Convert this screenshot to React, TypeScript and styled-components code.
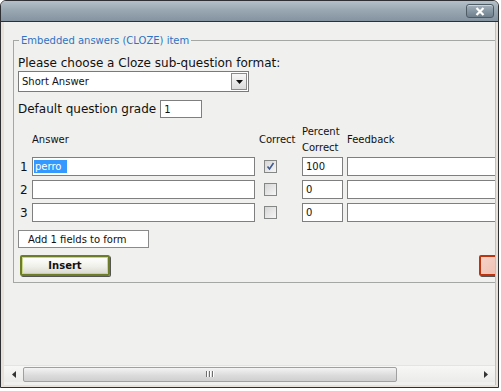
import { Fragment } from "react"
import { createGlobalStyle, styled } from "styled-components"

const GlobalStyle = createGlobalStyle`
  html, body {
    margin: 0;
    padding: 0;
    background: #ffffff;
  }
  body {
    font-family: "DejaVu Sans", Verdana, sans-serif;
  }
`

const Window = styled.div`
  width: 497px;
  height: 386px;
  border: 1px solid #2e3033;
  border-radius: 6px 6px 0 0;
  background: #e8e1d9;
  display: flex;
  flex-direction: column;
  overflow: hidden;
`

const TitleBar = styled.div`
  height: 21px;
  flex: none;
  background: linear-gradient(#b4c0c9, #9aa8b3 45%, #83939f);
  border-bottom: 1px solid #2e3033;
  display: flex;
  justify-content: flex-end;
  align-items: flex-start;
  padding: 3px 4px 0 0;
  box-sizing: border-box;
`

const CloseButton = styled.div`
  width: 28px;
  height: 14px;
  box-sizing: border-box;
  border: 1px solid #4f5c66;
  border-radius: 3px;
  background: linear-gradient(#a3b0ba, #8797a3 50%, #6f808c);
  box-shadow: inset 0 1px 0 rgba(255, 255, 255, 0.45);
  display: flex;
  align-items: center;
  justify-content: center;
`

const Frame = styled.div`
  flex: 1;
  margin: 0 2px 2px 3px;
  border-right: 1px solid #c9bfb5;
  background: #f0f0ee;
  display: flex;
  flex-direction: column;
  min-height: 0;
`

const Viewport = styled.div`
  flex: 1;
  overflow: hidden;
  min-height: 0;
`

const Page = styled.div`
  padding: 13px 0 0 9px;
`

const Fieldset = styled.fieldset`
  margin: 0;
  width: 482px;
  box-sizing: border-box;
  border: 1px solid #a3a8a4;
  border-right-color: transparent;
  padding: 10px 0 6px 4px;
`

const Legend = styled.legend`
  color: #2e73c4;
  font-size: 10px;
  padding: 0 2px;
  margin-left: 1px;
`

const Prompt = styled.div`
  font-size: 12px;
  color: #111;
  line-height: 15px;
`

const Select = styled.div`
  width: 231px;
  height: 21px;
  box-sizing: border-box;
  border: 1px solid #7a7a7a;
  background: #fff;
  display: flex;
  align-items: center;
  justify-content: space-between;
  padding: 1px 1px 1px 3px;
  font-size: 10px;
  color: #111;
`

const SelectArrow = styled.div`
  width: 16px;
  height: 17px;
  box-sizing: border-box;
  border: 1px solid #8a8a8a;
  background: linear-gradient(#f7f7f7, #dcdcdc);
  display: flex;
  align-items: center;
  justify-content: center;
`

const GradeRow = styled.div`
  margin-top: 8px;
  height: 18px;
  display: flex;
  align-items: center;
  gap: 4px;
  font-size: 12px;
  color: #111;
`

const Field = styled.div<{ $width?: number; $height?: number }>`
  width: ${(p) => p.$width ?? 223}px;
  height: ${(p) => p.$height ?? 19}px;
  box-sizing: border-box;
  border: 1px solid #7f7f7f;
  background: #fff;
  font-size: 10px;
  color: #111;
  display: flex;
  align-items: center;
  padding: 0 3px;
  white-space: nowrap;
`

const Selected = styled.span`
  background: #3399ff;
  color: #fff;
  padding: 1px 6px 1px 1px;
  margin-left: -2px;
`

const Grid = styled.div`
  margin-top: 6px;
  display: grid;
  grid-template-columns: 14px 227px 43px 45px 200px;
  row-gap: 4px;
  align-items: center;
`

const Head = styled.div`
  font-size: 10px;
  color: #111;
  line-height: 16px;
  margin-bottom: -3px;
`

const RowNum = styled.div`
  font-size: 12px;
  color: #111;
  padding-left: 2px;
`

const Check = styled.div`
  margin-left: 5px;
  width: 13px;
  height: 13px;
  box-sizing: border-box;
  border: 1px solid #858686;
  background: linear-gradient(135deg, #d6d6d6, #f6f6f6);
  display: flex;
  align-items: center;
  justify-content: center;
`

const AddButton = styled.div`
  margin-top: 8px;
  width: 131px;
  height: 18px;
  box-sizing: border-box;
  border: 1px solid #8a8a8a;
  background: #fff;
  font-size: 10px;
  color: #111;
  display: flex;
  align-items: center;
  padding-left: 9px;
`

const ButtonRow = styled.div`
  margin-top: 7px;
  display: flex;
  align-items: center;
  width: 500px;
`

const InsertButton = styled.div`
  margin-left: 2px;
  width: 90px;
  height: 21px;
  box-sizing: border-box;
  border: 2px solid #6d7d27;
  border-radius: 2px;
  background: linear-gradient(#ffffff, #f0f0ea 55%, #d8d8d0);
  box-shadow: 1px 1px 0 #555, inset 0 0 0 1px #c9d68a;
  font-size: 10px;
  font-weight: bold;
  color: #111;
  display: flex;
  align-items: center;
  justify-content: center;
`

const CancelButton = styled.div`
  margin-left: auto;
  margin-right: 17px;
  width: 22px;
  height: 21px;
  box-sizing: border-box;
  border: 2px solid #c0330f;
  border-radius: 2px;
  background: linear-gradient(135deg, #f6d2c8, #efc0b2);
  box-shadow: 1px 1px 0 #555;
`

const ScrollBar = styled.div`
  flex: none;
  height: 16px;
  margin-bottom: 3px;
  background: linear-gradient(#f7f7f5, #ebebe9);
  border-top: 1px solid #e4e4e2;
  display: flex;
  align-items: center;
`

const ArrowCell = styled.div`
  width: 19px;
  height: 16px;
  flex: none;
  display: flex;
  align-items: center;
  justify-content: center;
`

const Track = styled.div`
  flex: 1;
  height: 16px;
  display: flex;
  align-items: center;
`

const Thumb = styled.div`
  width: 374px;
  height: 15px;
  box-sizing: border-box;
  border: 1px solid #a0a0a0;
  border-radius: 2px;
  background: linear-gradient(#f4f4f4, #dcdcdc 55%, #cfcfcf);
  display: flex;
  align-items: center;
  justify-content: center;
  gap: 1px;
`

const Grip = styled.span`
  width: 1px;
  height: 6px;
  background: #6e6e6e;
  box-shadow: 1px 0 0 #fff;
  margin-right: 1px;
`

const rows = [
  { n: 1, answer: "perro", checked: true, percent: "100" },
  { n: 2, answer: "", checked: false, percent: "0" },
  { n: 3, answer: "", checked: false, percent: "0" },
]

function CheckMark() {
  return (
    <svg width="9" height="9" viewBox="0 0 9 9">
      <path d="M1.5 4.5 L3.5 7 L7.5 1" fill="none" stroke="#3f5a8f" strokeWidth="1.6" />
    </svg>
  )
}

export default function App() {
  return (
    <>
      <GlobalStyle />
      <Window>
        <TitleBar>
          <CloseButton>
            <svg width="10" height="9" viewBox="0 0 10 9">
              <path d="M1.5 1 L8.5 8 M8.5 1 L1.5 8" stroke="#fff" strokeWidth="2.2" />
            </svg>
          </CloseButton>
        </TitleBar>
        <Frame>
          <Viewport>
            <Page>
              <Fieldset>
                <Legend>Embedded answers (CLOZE) item</Legend>
                <Prompt>Please choose a Cloze sub-question format:</Prompt>
                <Select>
                  <span>Short Answer</span>
                  <SelectArrow>
                    <svg width="7" height="4" viewBox="0 0 7 4">
                      <path d="M0 0 H7 L3.5 4 Z" fill="#111" />
                    </svg>
                  </SelectArrow>
                </Select>
                <GradeRow>
                  Default question grade
                  <Field $width={42} $height={18}>1</Field>
                </GradeRow>
                <Grid>
                  <span />
                  <Head>Answer</Head>
                  <Head>Correct</Head>
                  <Head>
                    Percent
                    <br />
                    Correct
                  </Head>
                  <Head>Feedback</Head>
                  {rows.map((r) => (
                    <Fragment key={r.n}>
                      <RowNum>{r.n}</RowNum>
                      <Field>{r.answer && <Selected>{r.answer}</Selected>}</Field>
                      <div>
                        <Check>{r.checked && <CheckMark />}</Check>
                      </div>
                      <Field $width={41}>{r.percent}</Field>
                      <Field $width={200} />
                    </Fragment>
                  ))}
                </Grid>
                <AddButton>Add 1 fields to form</AddButton>
                <ButtonRow>
                  <InsertButton>Insert</InsertButton>
                  <CancelButton />
                </ButtonRow>
              </Fieldset>
            </Page>
          </Viewport>
          <ScrollBar>
            <ArrowCell>
              <svg width="4" height="7" viewBox="0 0 4 7">
                <path d="M4 0 V7 L0 3.5 Z" fill="#333" />
              </svg>
            </ArrowCell>
            <Track>
              <Thumb>
                <Grip />
                <Grip />
                <Grip />
              </Thumb>
            </Track>
            <ArrowCell>
              <svg width="4" height="7" viewBox="0 0 4 7">
                <path d="M0 0 V7 L4 3.5 Z" fill="#333" />
              </svg>
            </ArrowCell>
          </ScrollBar>
        </Frame>
      </Window>
    </>
  )
}
